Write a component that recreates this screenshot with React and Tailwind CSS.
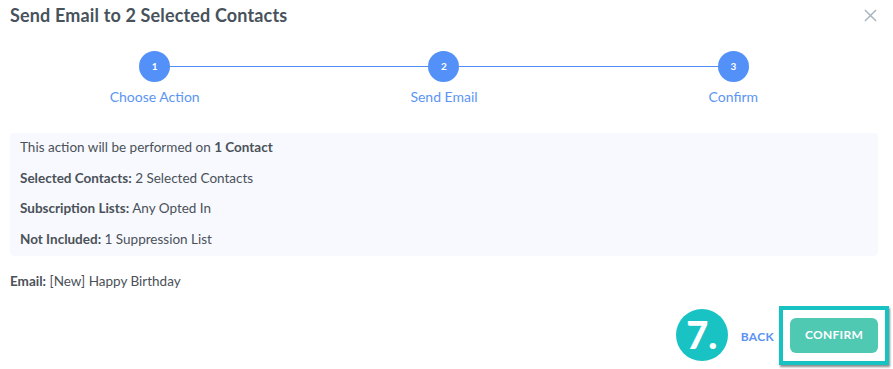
import React from 'react';

const steps = [
  { n: 1, label: 'Choose Action' },
  { n: 2, label: 'Send Email' },
  { n: 3, label: 'Confirm' },
];

const App = () => {
  return (
    <div className="w-[893px] h-[369px] bg-white pl-[10px] pr-[15px] overflow-hidden font-['Lato',sans-serif] text-[#4b5158]">
      {/* Header */}
      <div className="flex justify-between items-center h-[30px]">
        <h1 className="text-[18px] font-bold text-[#48525c] tracking-[0.15px]">Send Email to 2 Selected Contacts</h1>
        <svg className="w-[13px] h-[13px] mr-[1px]" viewBox="0 0 14 14" fill="none" stroke="#a9b4bf" strokeWidth="1.6">
          <path d="M1 1l12 12M13 1L1 13" />
        </svg>
      </div>

      {/* Stepper */}
      <div className="relative grid grid-cols-3 mt-[21px]">
        <div className="absolute top-[15px] left-[16.67%] right-[16.67%] h-px bg-[#4f8ef5]"></div>
        {steps.map(step => (
          <div key={step.n} className="relative flex flex-col items-center">
            <div className="w-[31px] h-[31px] rounded-full bg-[#5390f7] flex items-center justify-center text-white text-[10px] font-bold">
              {step.n}
            </div>
            <span className="mt-[5px] text-[14px] text-[#5b95f4] leading-[20px]">{step.label}</span>
          </div>
        ))}
      </div>

      {/* Summary */}
      <div className="mt-[26px] bg-[#f7f9fe] rounded-[4px] pl-[10px] pt-[4px] pb-[7px] text-[13.5px] leading-[20px] space-y-[10.5px]">
        <p>This action will be performed on <span className="font-bold">1 Contact</span></p>
        <p><span className="font-bold">Selected Contacts:</span> 2 Selected Contacts</p>
        <p><span className="font-bold">Subscription Lists:</span> Any Opted In</p>
        <p><span className="font-bold">Not Included:</span> 1 Suppression List</p>
      </div>

      <p className="mt-[15px] text-[13.5px] leading-[20px]"><span className="font-bold">Email:</span> [New] Happy Birthday</p>

      {/* Actions */}
      <div className="flex justify-end items-center mt-[27px]">
        <div className="relative">
          <div className="absolute right-[calc(100%+13px)] top-1/2 -translate-y-1/2 w-[52px] h-[52px] rounded-full bg-[#19c3c4] flex items-center justify-center text-white text-[38px] font-black leading-none pb-[2px]">
            7.
          </div>
          <button className="text-[12px] font-bold text-[#5a93f3] tracking-[0.3px]">BACK</button>
        </div>
        <div className="relative ml-[16px]">
          <div className="absolute -inset-[11px] -top-[12px] -bottom-[12px] border-[4px] border-[#17c2c3] shadow-[1px_2px_2px_rgba(0,0,0,0.45)]"></div>
          <button className="relative w-[88px] h-[35px] rounded-[6px] bg-[#50c9b3] text-white text-[12px] font-bold tracking-[0.3px]">
            CONFIRM
          </button>
        </div>
      </div>
    </div>
  );
};

export default App;
